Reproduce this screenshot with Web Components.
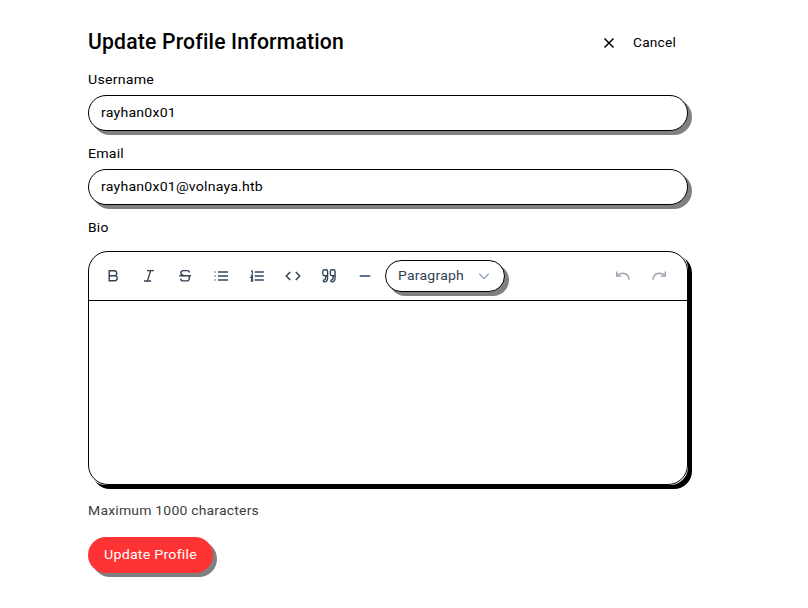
<!DOCTYPE html>
<html lang="en"><head><meta charset="utf-8"><title>Update Profile</title>
<style>body{margin:0;background:#fff;color:#000;font:13.3px/20px Roboto,"Noto Sans",sans-serif}</style></head><body>
<profile-page></profile-page>
<script>
class BaseElement extends HTMLElement{
  constructor(){super();this.attachShadow({mode:'open'});}
  connectedCallback(){this.shadowRoot.innerHTML=this.render();}
}
// A single line of text, stretched to a given advance width
customElements.define('wide-text',class extends BaseElement{
  render(){return `<style>:host{display:inline-block;white-space:nowrap;width:var(--w)}span{display:inline-block;letter-spacing:.2px;padding-top:var(--drop,1px);transform-origin:0 0}</style><span><slot></slot></span>`}
  connectedCallback(){
    super.connectedCallback();
    const s=this.shadowRoot.querySelector('span'),w=+this.getAttribute('width');
    this.style.setProperty('--w',w+'px');
    s.style.transform=`scaleX(${w/s.getBoundingClientRect().width})`;
  }
});
const icons={
  close:'<path d="M3.5 4.5l9 9M12.5 4.5l-9 9" stroke-width="1.5"/>',
  bold:'<path d="M4.2 2.8h5.3a2.2 2.2 0 012.2 2.4 2.2 2.2 0 01-2.2 2.5H4.2zM4.2 7.7h5.6a2.3 2.3 0 012.4 2.6 2.3 2.3 0 01-2.4 2.5H4.2z" stroke-width="1.4"/>',
  italic:'<path d="M6 2.7h7M3 13h7M9.6 2.7L6.4 13" stroke-width="1.3"/>',
  strike:'<path d="M12.4 4.5c0-1.2-.9-1.9-2-1.9H6.3c-1.5 0-2.4.9-2.4 2.2 0 1.7 1.2 2.3 2.6 2.7M2.3 7.8h11.6M11.9 8.3c1.3 2.3.2 4.6-2.1 4.6H6.1c-1.5 0-2.4-.8-2.4-2.1" stroke-width="1.4"/>',
  bullets:'<path d="M5 4h10M5 8h10M5 12h10" stroke="#64748b" stroke-width="2"/><path d="M1 4h2M1 8h2M1 12h2" stroke="#b4bbc6" stroke-width="2"/>',
  numbers:'<path d="M5.8 4h9M5.8 8h9M5.8 12h9" stroke="#64748b" stroke-width="2"/><path d="M2 3.2h1.3v2.6M1.9 7.1h1.6v.9L2 9.3h2M1.9 10.9h1.7v2.3H1.9M2.2 12h1.3" stroke-width="1.2"/>',
  code:'<path d="M5.2 4L1.3 8l3.9 4M10.8 4l3.9 4-3.9 4" stroke-width="1.5"/>',
  quote:'<path d="M6.5 7.7H3.6q-1.8 0-1.8-1.7V3.4q0-1.7 1.8-1.7h1.2q1.8 0 1.8 1.7v5.8c0 2.7-1.1 4.7-3.1 4.7-.9 0-1.2-.4-1.2-1s.4-.9 1-1c1.2-.2 1.5-1.5 1.5-4.2M14 7.7h-2.9q-1.8 0-1.8-1.7V3.4q0-1.7 1.8-1.7h1.2q1.8 0 1.8 1.7v5.8c0 2.7-1.1 4.7-3.1 4.7-.9 0-1.2-.4-1.2-1s.4-.9 1-1c1.2-.2 1.5-1.5 1.5-4.2" stroke-width="1.35"/>',
  rule:'<path d="M2.7 8h10.6" stroke="#64748b" stroke-width="2"/>',
  chevron:'<path d="M3.3 5.7L8 10.4l4.7-4.7" stroke-width="1.4"/>',
  undo:'<path d="M1.7 3.5v4.6h4.7M2.1 7.7C5.4 4 13.8 4.2 14 11.8" stroke-width="1.4"/>',
  redo:'<path d="M14.3 3.5v4.6H9.6M13.9 7.7C10.6 4 2.2 4.2 2 11.8" stroke-width="1.4"/>'
};
customElements.define('line-icon',class extends BaseElement{
  render(){return `<style>:host{display:block;width:16px;height:16px;flex:none}svg{display:block}</style><svg width="16" height="16" viewBox="0 0 16 16" fill="none" stroke="currentColor">${icons[this.getAttribute('name')]}</svg>`}
});
customElements.define('text-field',class extends BaseElement{
  render(){return `<style>:host{display:block}.label{display:flex;height:20px;margin-bottom:6px}
  .box{box-sizing:border-box;height:36px;border:1px solid #000;border-radius:18px;box-shadow:4px 4px 0 #808080;background:#fff;display:flex;align-items:center;padding:0 12px 1px}</style>
  <div class="label"><slot name="label"></slot></div><div class="box"><slot></slot></div>`}
});
customElements.define('block-select',class extends BaseElement{
  render(){return `<style>:host{box-sizing:border-box;display:flex;width:120px;height:32px;border:1px solid #000;border-radius:16px;box-shadow:4px 4px 0 #808080;background:#fff;align-items:center;justify-content:space-between;padding:0 12px}wide-text{padding-bottom:1px}line-icon{color:#94a3b8}</style>
  <wide-text width="66">Paragraph</wide-text><line-icon name="chevron"></line-icon>`}
});
customElements.define('rich-editor',class extends BaseElement{
  render(){return `<style>:host{display:block;height:234px;border-radius:18px;box-shadow:4px 4px 0 #000;color:#334155}
  .frame{box-sizing:border-box;display:flex;flex-direction:column;height:100%;border:1px solid #000;border-radius:20px;background:#fff}
  .bar{box-sizing:border-box;height:49px;border-bottom:1px solid #000;display:flex;align-items:center;padding:0 20px 0 16px}
  .tools{display:flex;gap:20px}block-select{margin-left:12px}.history{display:flex;gap:20px;margin-left:auto;color:#9ca3af}.area{flex:1}</style>
  <div class="frame"><div class="bar"><div class="tools">${['bold','italic','strike','bullets','numbers','code','quote','rule'].map(i=>`<line-icon name="${i}"></line-icon>`).join('')}</div><block-select></block-select><div class="history"><line-icon name="undo"></line-icon><line-icon name="redo"></line-icon></div></div><div class="area"></div></div>`}
});
customElements.define('primary-button',class extends BaseElement{
  render(){return `<style>:host{box-sizing:border-box;display:flex;align-items:center;width:125px;height:36px;padding:0 16px 2px;border-radius:18px;background:#f33;color:#fff;box-shadow:4px 4px 0 #808080}</style><slot></slot>`}
});
customElements.define('profile-page',class extends BaseElement{
  render(){return `<style>:host{display:block;box-sizing:border-box;width:688px;height:608px;padding:26px 0 0 88px}
  header{display:flex;height:32px;align-items:center;justify-content:space-between;margin-bottom:11px}
  h1{margin:0;font-size:22px;line-height:32px;font-weight:500;--drop:0px}.cancel{display:flex;align-items:center;gap:16px;padding-right:12px}
  text-field{margin-bottom:12px}.bio{display:flex;height:20px;margin-bottom:14px}.help{display:flex;height:20px;margin:15px 0 17px;color:#404040}</style>
  <header><h1><wide-text width="256">Update Profile Information</wide-text></h1><div class="cancel"><line-icon name="close"></line-icon><wide-text width="43">Cancel</wide-text></div></header>
  <text-field><wide-text slot="label" width="66">Username</wide-text><wide-text width="75">rayhan0x01</wide-text></text-field>
  <text-field><wide-text slot="label" width="36">Email</wide-text><wide-text width="162">rayhan0x01@volnaya.htb</wide-text></text-field>
  <div class="bio"><wide-text width="20.5">Bio</wide-text></div><rich-editor></rich-editor>
  <div class="help"><wide-text width="171">Maximum 1000 characters</wide-text></div>
  <primary-button><wide-text width="93">Update Profile</wide-text></primary-button>`}
});
</script></body></html>
